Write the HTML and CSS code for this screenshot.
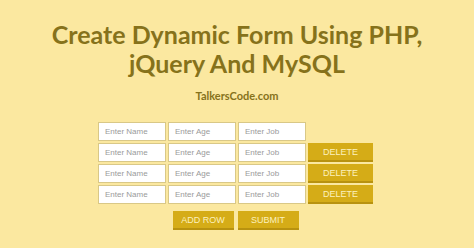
FILE: index.html
```html
<!DOCTYPE html>
<html>
<head>
<meta charset="utf-8">
<link rel="stylesheet" href="styles.css">
</head>
<body>
<div class="page">
  <h1 class="title">Create Dynamic Form Using PHP,<br>jQuery And MySQL</h1>
  <p class="site">TalkersCode.com</p>
  <form class="form">
    <div class="rows">
      <input class="field" type="text" placeholder="Enter Name">
      <input class="field" type="text" placeholder="Enter Age">
      <input class="field" type="text" placeholder="Enter Job">
      <span></span>
      <input class="field" type="text" placeholder="Enter Name">
      <input class="field" type="text" placeholder="Enter Age">
      <input class="field" type="text" placeholder="Enter Job">
      <button class="btn del" type="button">DELETE</button>
      <input class="field" type="text" placeholder="Enter Name">
      <input class="field" type="text" placeholder="Enter Age">
      <input class="field" type="text" placeholder="Enter Job">
      <button class="btn del" type="button">DELETE</button>
      <input class="field" type="text" placeholder="Enter Name">
      <input class="field" type="text" placeholder="Enter Age">
      <input class="field" type="text" placeholder="Enter Job">
      <button class="btn del" type="button">DELETE</button>
    </div>
    <div class="actions">
      <button class="btn act" type="button">ADD ROW</button>
      <button class="btn act" type="button">SUBMIT</button>
    </div>
  </form>
</div>
</body>
</html>
```
FILE: styles.css
```css
html, body {
  margin: 0;
  padding: 0;
  background: #fbe8a0;
}
.page {
  width: 474px;
  height: 248px;
  overflow: hidden;
  display: flex;
  flex-direction: column;
  align-items: center;
  padding-top: 20px;
  box-sizing: border-box;
}
.title {
  margin: 0;
  font-family: Lato, "Open Sans", sans-serif;
  font-weight: 700;
  font-size: 25px;
  line-height: 29px;
  color: #86721b;
  text-align: center;
}
.site {
  margin: 11px 0 0;
  font-family: Lato, sans-serif;
  font-weight: 700;
  font-size: 11px;
  line-height: 14px;
  color: #86721b;
}
.form {
  margin-top: 19px;
  display: flex;
  flex-direction: column;
  align-items: center;
  padding-right: 3px;
}
.rows {
  display: grid;
  grid-template-columns: 68px 68px 68px 65px;
  column-gap: 2px;
  row-gap: 2px;
}
.field {
  box-sizing: border-box;
  width: 68px;
  height: 19px;
  margin: 0;
  padding: 0 6px;
  border: 1px solid #d9c887;
  background: #ffffff;
  font-family: "Liberation Sans", Arial, sans-serif;
  font-size: 8px;
  outline: none;
}
.field::placeholder {
  color: #9a9a9a;
}
.btn {
  box-sizing: border-box;
  margin: 0;
  border: 0;
  border-bottom: 2px solid #b8920f;
  background: #d5ac17;
  color: #fcf1bd;
  font-family: "Liberation Sans", Arial, sans-serif;
  font-size: 9px;
  padding: 0;
}
.del {
  height: 19px;
  width: 65px;
}
.actions {
  display: flex;
  gap: 4px;
  margin-top: 7px;
}
.act {
  width: 61px;
  height: 19px;
}
```
